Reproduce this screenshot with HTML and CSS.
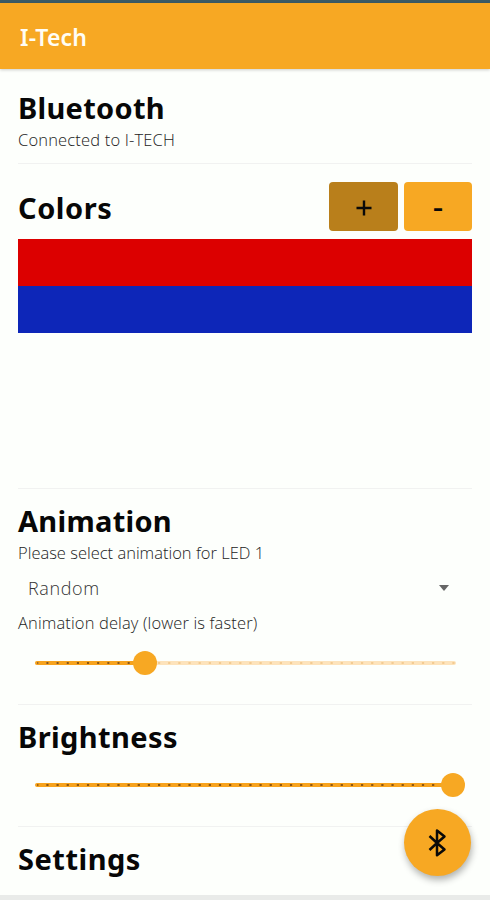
FILE: index.html
```html
<!DOCTYPE html>
<html lang="en">
<head>
<meta charset="utf-8">
<title>I-Tech</title>
<link rel="stylesheet" href="styles.css">
</head>
<body>
<div class="app">
  <div class="status"></div>
  <header class="bar"><span class="brand">I-Tech</span></header>
  <main class="content">
    <section class="section bluetooth">
      <h2 class="w-bluetooth">Bluetooth</h2>
      <p class="w-connected">Connected to I-TECH</p>
    </section>
    <section class="section colors">
      <div class="row">
        <h2 class="w-colors">Colors</h2>
        <div class="buttons">
          <button class="btn pressed" aria-label="Add color"><svg width="16" height="16" viewBox="0 0 16 16"><path d="M8 .5v15M.5 8h15"/></svg></button>
          <button class="btn minus" aria-label="Remove color"><span>-</span></button>
        </div>
      </div>
      <div class="swatch red"></div>
      <div class="swatch blue"></div>
    </section>
    <section class="section animation">
      <h2 class="w-animation">Animation</h2>
      <p class="w-select">Please select animation for LED 1</p>
      <div class="select"><span>Random</span><i class="caret"></i></div>
      <p class="w-delay">Animation delay (lower is faster)</p>
      <svg class="slider" width="454" height="26" viewBox="18 0 454 26">
        <path class="track pale" d="M37 13H454"/><path class="track" d="M37 13H145"/>
        <path class="ticks pale-ticks" d="M37.2 13H455"/><path class="ticks" d="M37.2 13H134"/>
        <circle cx="145" cy="13" r="12"/>
      </svg>
    </section>
    <section class="section brightness">
      <h2 class="w-brightness">Brightness</h2>
      <svg class="slider" width="454" height="26" viewBox="18 0 454 26">
        <path class="track" d="M37 13H453"/><path class="ticks" d="M37.2 13H441"/>
        <circle cx="453" cy="13" r="12"/>
      </svg>
    </section>
    <section class="settings"><h2 class="w-settings">Settings</h2></section>
  </main>
  <div class="bottom"></div>
  <button class="fab" aria-label="Bluetooth">
    <svg width="20" height="30" viewBox="0 0 20 30"><path d="M1.500 8 9 15 16.500 21.500 9 27.300V2.500L16.500 8.500 9 15 1.500 22"/></svg>
  </button>
</div>
</body>
</html>
```
FILE: styles.css
```css
* { box-sizing: border-box; }
body { margin: 0; background: #fdfffc; color: #070707; font-family: "Noto Sans", sans-serif; }
.app { position: relative; height: 900px; overflow: hidden; display: flex; flex-direction: column; }
.status { height: 3px; background: #3b5b66; flex: none; }
.bar { height: 66px; flex: none; padding: 2px 20px 0; display: flex; align-items: center; background: #f7a823; box-shadow: 0 1px 3px #0003; }
.brand { color: #fffdf5; font-size: 23px; font-weight: 600; line-height: 30px; letter-spacing: .15px; }
.content { flex: 1; min-height: 0; padding: 0 18px; }
.section { border-bottom: 1px solid #f1f2f1; }
h2 { margin: 0; font-size: 29px; line-height: 36px; font-weight: 700; white-space: nowrap; letter-spacing: .28px; }
p { margin: 0; font-family: "Open Sans", sans-serif; font-weight: 300; font-size: 16.500px; line-height: 24px; color: #222; white-space: nowrap; }
h2 + p { margin-top: 2px; }
.w-connected { letter-spacing: .17px; }
.w-delay { letter-spacing: .13px; }
.w-colors { letter-spacing: .55px; }
.w-brightness { letter-spacing: .4px; }
.w-settings { letter-spacing: .5px; }
.bluetooth { height: 95px; padding-top: 21px; }
.colors { height: 325px; padding-top: 18px; }
.row { display: flex; justify-content: space-between; height: 57px; }
.row h2 { margin-top: 8px; }
.buttons { display: flex; gap: 6px; height: 49px; }
.btn { width: 68px; padding: 0; border: 0; border-radius: 4px; background: #f7a823; color: #090909; font: 600 25px/49px "Noto Sans", sans-serif; display: flex; align-items: center; justify-content: center; }
.btn.pressed { width: 69px; background: #b97f1b; padding-top: 3px; }
.minus span { transform: scaleX(1.250); }
.btn path { stroke: #090909; stroke-width: 2.400; fill: none; }
.swatch { height: 47px; }
.red { background: #dc0000; }
.blue { background: #0d26b8; }
.animation { height: 216px; padding-top: 14px; }
.select { height: 46px; display: flex; align-items: center; justify-content: space-between; padding: 0 23px 0 10px; font: 300 18px/24px "Open Sans", sans-serif; color: #333; letter-spacing: .6px; }
.caret { width: 0; height: 0; border: 5.500px solid transparent; border-top: 6px solid #666; border-bottom: 0; }
.slider { display: block; fill: #f7a823; }
.animation .slider { margin-top: 15px; }
.track { stroke: #f7a31d; stroke-width: 4; stroke-linecap: round; }
.track.pale { stroke: #fde3bb; }
.ticks { stroke: #8a5512; stroke-width: 2.200; stroke-dasharray: 2.200 7.950; stroke-dashoffset: 1; }
.pale-ticks { stroke: #f3cb91; }
.brightness { height: 122px; padding-top: 14px; }
.brightness .slider { margin-top: 17px; }
.settings { padding-top: 14px; }
.bottom { flex: none; height: 5px; background: #e9ebe9; }
.fab { position: absolute; left: 404px; top: 809px; width: 67px; height: 67px; padding: 0; border: 0; border-radius: 50%; background: #f7a823; box-shadow: 1px 4px 7px #0000004d; display: flex; align-items: center; justify-content: center; }
.fab path { fill: none; stroke: #090909; stroke-width: 2.500; stroke-linejoin: round; }
```
